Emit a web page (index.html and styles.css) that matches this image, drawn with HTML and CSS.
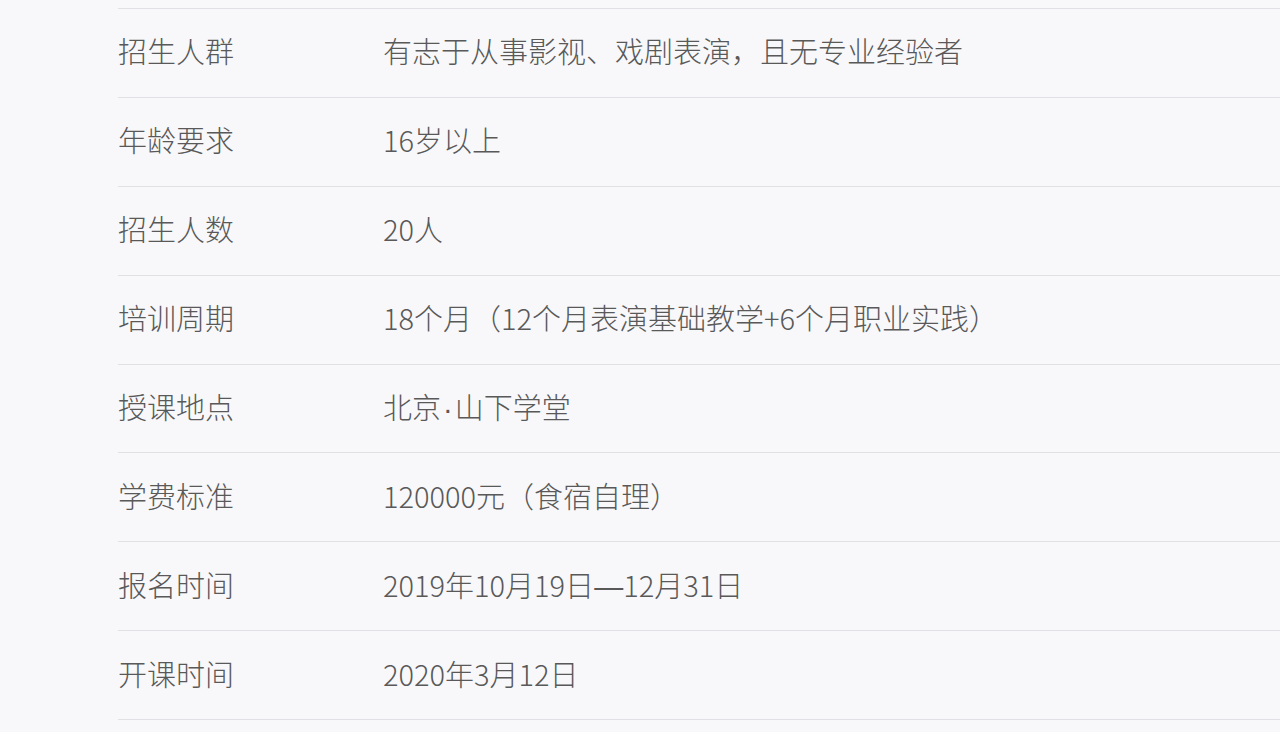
FILE: index.html
```html
<!DOCTYPE html>
<html lang="zh-CN">
<head>
<meta charset="utf-8">
<title>招生信息</title>
<link rel="stylesheet" href="styles.css">
</head>
<body>
<div class="info">
  <div class="row"><div class="label">招生人群</div><div class="value">有志于从事影视、戏剧表演，且无专业经验者</div></div>
  <div class="row"><div class="label">年龄要求</div><div class="value">16岁以上</div></div>
  <div class="row"><div class="label">招生人数</div><div class="value">20人</div></div>
  <div class="row"><div class="label">培训周期</div><div class="value">18个月（12个月表演基础教学+6个月职业实践）</div></div>
  <div class="row"><div class="label">授课地点</div><div class="value">北京<span class="dot">·</span>山下学堂</div></div>
  <div class="row"><div class="label">学费标准</div><div class="value">120000元（食宿自理）</div></div>
  <div class="row"><div class="label">报名时间</div><div class="value">2019年10月19日<span class="dash">—</span>12月31日</div></div>
  <div class="row"><div class="label">开课时间</div><div class="value">2020年3月12日</div></div>
</div>
</body>
</html>
```
FILE: styles.css
```css
html, body {
  margin: 0;
  padding: 0;
  background: #f8f8fa;
}
body {
  font-family: "Noto Sans CJK SC", "Noto Sans", sans-serif;
  color: #595959;
  height: 732px;
  overflow: hidden;
}
.info {
  padding: 8px 0 0 118px;
}
.row {
  display: flex;
  align-items: center;
  box-sizing: border-box;
  height: 88.9px;
  padding-bottom: 5px;
  border-top: 1px solid #e1e1e5;
  font-size: 29px;
  font-weight: 300;
}
.row:last-child {
  border-bottom: 1px solid #e1e1e5;
  height: 89.9px;
}
.label {
  width: 265px;
  flex: none;
}
.value {
  flex: 1;
  white-space: nowrap;
}
.dot {
  font-family: "Liberation Sans", sans-serif;
  padding: 0 2px;
}
.dash {
  font-family: "Liberation Sans", sans-serif;
}
```
